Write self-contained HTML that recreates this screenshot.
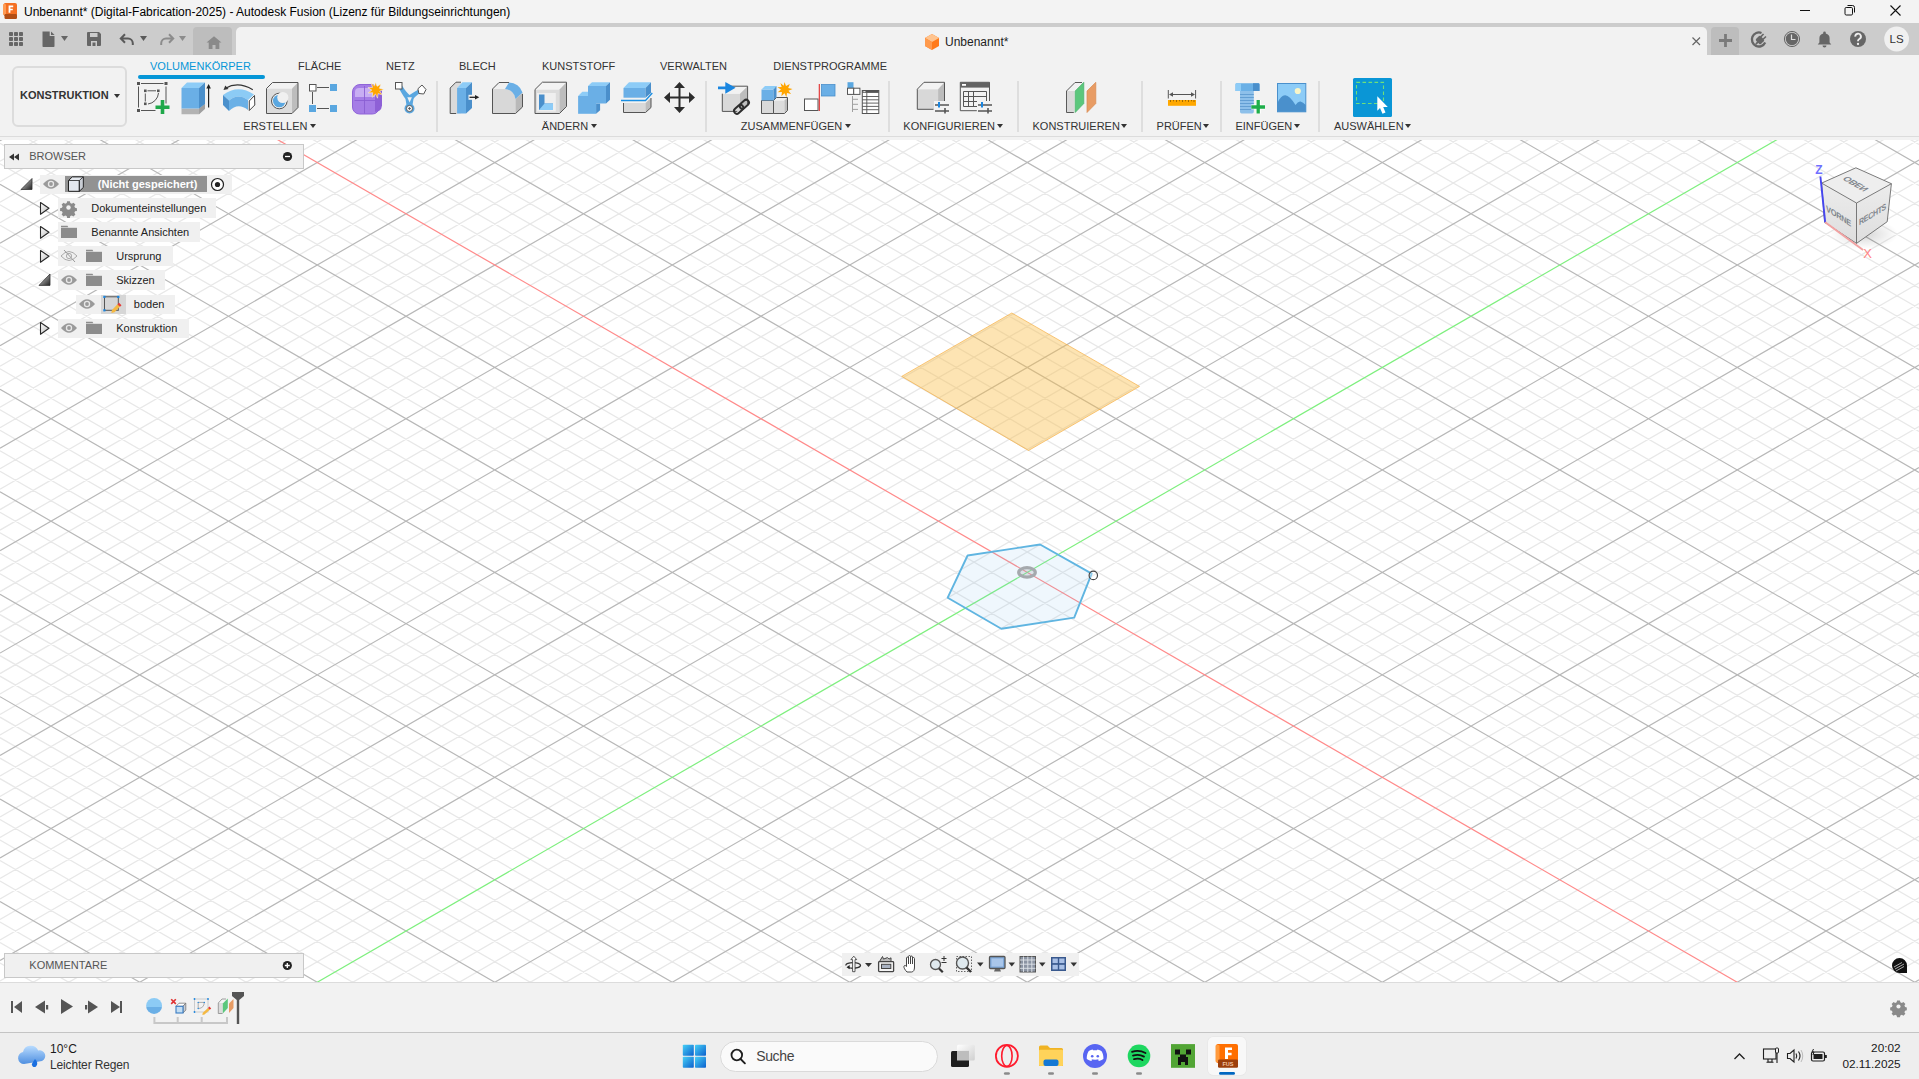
<!DOCTYPE html><html><head><meta charset="utf-8"><style>
html,body{margin:0;padding:0;width:1919px;height:1079px;overflow:hidden;background:#f2f2f2}
.t{position:absolute;white-space:nowrap;line-height:1;font-family:"Liberation Sans", sans-serif}
svg{display:block}
</style></head><body><div style="position:absolute;left:0;top:140px;width:1919px;height:842px;background:#fff;overflow:hidden"><svg width="1919" height="842" viewBox="0 140 1919 842" style="position:absolute;left:0;top:0"><path d="M0 1045.04L1919 2152.81M0 1024.54L1919 2132.32M0 983.56L1919 2091.34M0 963.07L1919 2070.84M0 942.57L1919 2050.35M0 922.08L1919 2029.86M0 881.09L1919 1988.87M0 860.60L1919 1968.38M0 840.11L1919 1947.88M0 819.61L1919 1927.39M0 778.63L1919 1886.41M0 758.14L1919 1865.91M0 737.64L1919 1845.42M0 717.15L1919 1824.93M0 676.16L1919 1783.94M0 655.67L1919 1763.45M0 635.18L1919 1742.95M0 614.68L1919 1722.46M0 573.70L1919 1681.48M0 553.21L1919 1660.98M0 532.71L1919 1640.49M0 512.22L1919 1620.00M0 471.23L1919 1579.01M0 450.74L1919 1558.52M0 430.25L1919 1538.02M0 409.75L1919 1517.53M0 368.77L1919 1476.55M0 348.28L1919 1456.05M0 327.78L1919 1435.56M0 307.29L1919 1415.07M0 266.30L1919 1374.08M0 245.81L1919 1353.59M0 225.32L1919 1333.09M0 204.82L1919 1312.60M0 163.84L1919 1271.62M0 143.35L1919 1251.12M0 122.85L1919 1230.63M0 102.36L1919 1210.14M0 61.37L1919 1169.15M0 40.88L1919 1148.66M0 20.39L1919 1128.16M0 -0.11L1919 1107.67M0 -41.09L1919 1066.69M0 -61.58L1919 1046.19M0 -82.08L1919 1025.70M0 -102.57L1919 1005.21M0 -143.56L1919 964.22M0 -164.05L1919 943.73M0 -184.54L1919 923.23M0 -205.04L1919 902.74M0 -246.02L1919 861.76M0 -266.51L1919 841.26M0 -287.01L1919 820.77M0 -307.50L1919 800.28M0 -348.49L1919 759.29M0 -368.98L1919 738.80M0 -389.47L1919 718.30M0 -409.97L1919 697.81M0 -450.95L1919 656.83M0 -471.44L1919 636.33M0 -491.94L1919 615.84M0 -512.43L1919 595.35M0 -553.42L1919 554.36M0 -573.91L1919 533.87M0 -594.40L1919 513.37M0 -614.90L1919 492.88M0 -655.88L1919 451.90M0 -676.37L1919 431.40M0 -696.87L1919 410.91M0 -717.36L1919 390.42M0 -758.35L1919 349.43M0 -778.84L1919 328.94M0 -799.33L1919 308.44M0 -819.83L1919 287.95M0 -860.81L1919 246.97M0 -881.30L1919 226.47M0 -901.80L1919 205.98M0 -922.29L1919 185.49M0 -963.28L1919 144.50M0 -983.77L1919 124.01M0 -1004.26L1919 103.51M0 -1024.76L1919 83.02M0 79.27L1919 -1028.51M0 99.76L1919 -1008.01M0 120.26L1919 -987.52M0 161.24L1919 -946.54M0 181.73L1919 -926.04M0 202.23L1919 -905.55M0 222.72L1919 -885.06M0 263.71L1919 -844.07M0 284.20L1919 -823.58M0 304.69L1919 -803.08M0 325.19L1919 -782.59M0 366.17L1919 -741.61M0 386.66L1919 -721.11M0 407.16L1919 -700.62M0 427.65L1919 -680.13M0 468.64L1919 -639.14M0 489.13L1919 -618.65M0 509.62L1919 -598.15M0 530.12L1919 -577.66M0 571.10L1919 -536.68M0 591.59L1919 -516.18M0 612.09L1919 -495.69M0 632.58L1919 -475.20M0 673.57L1919 -434.21M0 694.06L1919 -413.72M0 714.55L1919 -393.22M0 735.05L1919 -372.73M0 776.03L1919 -331.75M0 796.52L1919 -311.25M0 817.02L1919 -290.76M0 837.51L1919 -270.27M0 878.50L1919 -229.28M0 898.99L1919 -208.79M0 919.48L1919 -188.29M0 939.98L1919 -167.80M0 980.96L1919 -126.82M0 1001.45L1919 -106.32M0 1021.95L1919 -85.83M0 1042.44L1919 -65.34M0 1083.43L1919 -24.35M0 1103.92L1919 -3.86M0 1124.41L1919 16.64M0 1144.91L1919 37.13M0 1185.89L1919 78.11M0 1206.38L1919 98.61M0 1226.88L1919 119.10M0 1247.37L1919 139.59M0 1288.36L1919 180.58M0 1308.85L1919 201.07M0 1329.34L1919 221.57M0 1349.84L1919 242.06M0 1390.82L1919 283.04M0 1411.31L1919 303.54M0 1431.81L1919 324.03M0 1452.30L1919 344.52M0 1493.29L1919 385.51M0 1513.78L1919 406.00M0 1534.27L1919 426.50M0 1554.77L1919 446.99M0 1595.75L1919 487.97M0 1616.24L1919 508.47M0 1636.74L1919 528.96M0 1657.23L1919 549.45M0 1698.22L1919 590.44M0 1718.71L1919 610.93M0 1739.20L1919 631.43M0 1759.70L1919 651.92M0 1800.68L1919 692.90M0 1821.17L1919 713.40M0 1841.67L1919 733.89M0 1862.16L1919 754.38M0 1903.15L1919 795.37M0 1923.64L1919 815.86M0 1944.13L1919 836.36M0 1964.63L1919 856.85M0 2005.61L1919 897.83M0 2026.10L1919 918.33M0 2046.60L1919 938.82M0 2067.09L1919 959.31M0 2108.08L1919 1000.30M0 2128.57L1919 1020.79" stroke="#e8e8e8" stroke-width="1.3" fill="none"/><path d="M0 1004.05L1919 2111.83M0 901.59L1919 2009.36M0 799.12L1919 1906.90M0 696.66L1919 1804.43M0 594.19L1919 1701.97M0 491.73L1919 1599.50M0 389.26L1919 1497.04M0 286.80L1919 1394.57M0 184.33L1919 1292.11M0 81.87L1919 1189.64M0 -123.06L1919 984.71M0 -225.53L1919 882.25M0 -327.99L1919 779.78M0 -430.46L1919 677.32M0 -532.92L1919 574.85M0 -635.39L1919 472.39M0 -737.85L1919 369.92M0 -840.32L1919 267.46M0 -942.78L1919 164.99M0 140.75L1919 -967.03M0 243.21L1919 -864.56M0 345.68L1919 -762.10M0 448.14L1919 -659.63M0 550.61L1919 -557.17M0 653.07L1919 -454.70M0 755.54L1919 -352.24M0 858.00L1919 -249.77M0 960.47L1919 -147.31M0 1062.93L1919 -44.84M0 1267.86L1919 160.09M0 1370.33L1919 262.55M0 1472.79L1919 365.02M0 1575.26L1919 467.48M0 1677.72L1919 569.95M0 1780.19L1919 672.41M0 1882.65L1919 774.88M0 1985.12L1919 877.34M0 2087.58L1919 979.81" stroke="#b8b8b8" stroke-width="1.2" fill="none"/><polygon points="1011.8,313 1139.5,386.4 1028.5,450.5 901.7,376.4" fill="rgba(251,190,75,0.42)" stroke="rgba(245,175,70,0.7)" stroke-width="1"/><path d="M0 -20.60L1919 1087.18" stroke="#ff8a8a" stroke-width="1.2" fill="none"/><path d="M0 1165.40L1919 57.62" stroke="#7eef7e" stroke-width="1.2" fill="none"/><polygon points="967.6,555.5 1040.1,544.5 1091.7,573.6 1074.2,617.6 1001.3,628.8 947.7,597.7" fill="rgba(120,190,235,0.12)" stroke="#60b5e1" stroke-width="1.9" stroke-linejoin="round"/><ellipse cx="1027" cy="572.4" rx="8.3" ry="4.7" fill="rgba(160,165,170,0.25)" stroke="#a5a9ad" stroke-width="3.2"/><circle cx="1093.3" cy="575.4" r="4.2" fill="rgba(255,255,255,0.3)" stroke="#444" stroke-width="1.2"/></svg></div>
<div style="position:absolute;left:0px;top:0px;width:1919px;height:23px;background:#f3f3f3"></div>
<div class="t" style="left:24.00px;top:6.00px;font-size:12px;color:#000;font-weight:normal;">Unbenannt* (Digital-Fabrication-2025) - Autodesk Fusion (Lizenz für Bildungseinrichtungen)</div>
<div style="position:absolute;left:0px;top:23px;width:1919px;height:32px;background:#cccccc"></div>
<div style="position:absolute;left:193px;top:27px;width:39px;height:28px;background:#bdbdbd;border-radius:4px 4px 0 0"></div>
<div style="position:absolute;left:236px;top:27px;width:1471px;height:28px;background:#f2f2f2;border-radius:5px 5px 0 0"></div>
<div style="position:absolute;left:1711px;top:27px;width:28px;height:28px;background:#bdbdbd;border-radius:4px 4px 0 0"></div>
<div class="t" style="left:945.00px;top:36.00px;font-size:12px;color:#222;font-weight:normal;">Unbenannt*</div>
<div style="position:absolute;left:0px;top:55px;width:1919px;height:81px;background:#f2f2f2"></div>
<div style="position:absolute;left:0px;top:136px;width:1919px;height:1px;background:#dcdcdc"></div>
<div style="position:absolute;left:0px;top:137px;width:1919px;height:3px;background:#f2f2f2"></div>
<div style="position:absolute;left:11.5px;top:65.5px;width:115.0px;height:61.3px;border:2px solid #dcdcdc;border-radius:6px;box-sizing:border-box"></div>
<div class="t" style="left:20.00px;top:90.00px;font-size:11px;color:#333;font-weight:bold;">KONSTRUKTION</div>
<svg style="position:absolute;left:114px;top:94px;" width="6" height="4" viewBox="0 0 6 4"><path d="M0 0H6L3.0 4Z" fill="#333"/></svg>
<div class="t" style="left:150.00px;top:61.00px;font-size:11px;color:#0696d7;font-weight:normal;">VOLUMENKÖRPER</div>
<div class="t" style="left:298.00px;top:61.00px;font-size:11px;color:#333;font-weight:normal;">FLÄCHE</div>
<div class="t" style="left:386.00px;top:61.00px;font-size:11px;color:#333;font-weight:normal;">NETZ</div>
<div class="t" style="left:459.00px;top:61.00px;font-size:11px;color:#333;font-weight:normal;">BLECH</div>
<div class="t" style="left:542.00px;top:61.00px;font-size:11px;color:#333;font-weight:normal;">KUNSTSTOFF</div>
<div class="t" style="left:660.00px;top:61.00px;font-size:11px;color:#333;font-weight:normal;">VERWALTEN</div>
<div class="t" style="left:773.30px;top:61.00px;font-size:11px;color:#333;font-weight:normal;">DIENSTPROGRAMME</div>
<div style="position:absolute;left:138px;top:75.4px;width:127px;height:3.3px;background:#0696d7;border-radius:2px"></div>
<div class="t" style="left:243.30px;top:121.00px;font-size:11px;color:#333;font-weight:normal;">ERSTELLEN</div>
<svg style="position:absolute;left:310px;top:124px;" width="6" height="4" viewBox="0 0 6 4"><path d="M0 0H6L3.0 4Z" fill="#333"/></svg>
<div class="t" style="left:541.80px;top:121.00px;font-size:11px;color:#333;font-weight:normal;">ÄNDERN</div>
<svg style="position:absolute;left:591.4px;top:124px;" width="6.0" height="4" viewBox="0 0 6.0 4"><path d="M0 0H6.0L3.0 4Z" fill="#333"/></svg>
<div class="t" style="left:740.80px;top:121.00px;font-size:11px;color:#333;font-weight:normal;">ZUSAMMENFÜGEN</div>
<svg style="position:absolute;left:845px;top:124px;" width="6" height="4" viewBox="0 0 6 4"><path d="M0 0H6L3.0 4Z" fill="#333"/></svg>
<div class="t" style="left:903.30px;top:121.00px;font-size:11px;color:#333;font-weight:normal;">KONFIGURIEREN</div>
<svg style="position:absolute;left:996.7px;top:124px;" width="6.0" height="4" viewBox="0 0 6.0 4"><path d="M0 0H6.0L3.0 4Z" fill="#333"/></svg>
<div class="t" style="left:1032.50px;top:121.00px;font-size:11px;color:#333;font-weight:normal;">KONSTRUIEREN</div>
<svg style="position:absolute;left:1121px;top:124px;" width="6" height="4" viewBox="0 0 6 4"><path d="M0 0H6L3.0 4Z" fill="#333"/></svg>
<div class="t" style="left:1156.60px;top:121.00px;font-size:11px;color:#333;font-weight:normal;">PRÜFEN</div>
<svg style="position:absolute;left:1203px;top:124px;" width="6" height="4" viewBox="0 0 6 4"><path d="M0 0H6L3.0 4Z" fill="#333"/></svg>
<div class="t" style="left:1235.40px;top:121.00px;font-size:11px;color:#333;font-weight:normal;">EINFÜGEN</div>
<svg style="position:absolute;left:1294px;top:124px;" width="6" height="4" viewBox="0 0 6 4"><path d="M0 0H6L3.0 4Z" fill="#333"/></svg>
<div class="t" style="left:1333.90px;top:121.00px;font-size:11px;color:#333;font-weight:normal;">AUSWÄHLEN</div>
<svg style="position:absolute;left:1405px;top:124px;" width="6" height="4" viewBox="0 0 6 4"><path d="M0 0H6L3.0 4Z" fill="#333"/></svg>
<div style="position:absolute;left:436px;top:81px;width:2px;height:51px;background:#dedede"></div>
<div style="position:absolute;left:705px;top:81px;width:2px;height:51px;background:#dedede"></div>
<div style="position:absolute;left:888px;top:81px;width:2px;height:51px;background:#dedede"></div>
<div style="position:absolute;left:1017px;top:81px;width:2px;height:51px;background:#dedede"></div>
<div style="position:absolute;left:1141px;top:81px;width:2px;height:51px;background:#dedede"></div>
<div style="position:absolute;left:1220px;top:81px;width:2px;height:51px;background:#dedede"></div>
<div style="position:absolute;left:1318px;top:81px;width:2px;height:51px;background:#dedede"></div>
<div style="position:absolute;left:1352.5px;top:78.2px;width:39.0px;height:39.3px;background:#0a96d6;border-radius:1.5px"></div>
<div style="position:absolute;left:0px;top:982px;width:1919px;height:1px;background:#dcdcdc"></div>
<div style="position:absolute;left:0px;top:983px;width:1919px;height:49px;background:#f2f2f2"></div>
<div style="position:absolute;left:0px;top:1032px;width:1919px;height:1px;background:#c4c4c4"></div>
<div style="position:absolute;left:0px;top:1033px;width:1919px;height:46px;background:#eeeeee"></div>
<div style="position:absolute;left:4px;top:144px;width:300px;height:25px;background:#f0f0f0;border:1px solid #c8c8c8;box-sizing:border-box"></div>
<div class="t" style="left:29.20px;top:151.00px;font-size:11px;color:#555;font-weight:normal;">BROWSER</div>
<div style="position:absolute;left:4px;top:953px;width:300px;height:25px;background:#f0f0f0;border:1px solid #c8c8c8;box-sizing:border-box"></div>
<div class="t" style="left:29.30px;top:960.00px;font-size:11px;color:#555;font-weight:normal;">KOMMENTARE</div>
<svg style="position:absolute;left:0;top:0;" width="1919" height="1079" viewBox="0 0 1919 1079"><rect x="3.5" y="3" width="13.5" height="13" rx="2" fill="#f46f22"/><rect x="3" y="4" width="3" height="11" rx="1" fill="#ff9a52"/><rect x="4.5" y="14" width="12.5" height="5" rx="1.2" fill="#b24d14"/><path d="M8.6 5.6h4.6v1.6h-2.8v1.5h2.4v1.5h-2.4v2.6H8.6z" fill="#fff"/><path d="M1800 10.5h10" stroke="#111" stroke-width="1"/><rect x="1845" y="7.5" width="7.5" height="7.5" rx="1.2" fill="none" stroke="#111" stroke-width="1"/><path d="M1847.5 5.5h5a2 2 0 0 1 2 2v5" fill="none" stroke="#111" stroke-width="1"/><path d="M1890.5 5.5l10 10M1900.5 5.5l-10 10" stroke="#111" stroke-width="1.1"/><rect x="9" y="32" width="4" height="4" rx="0.8" fill="#666"/><rect x="9" y="37" width="4" height="4" rx="0.8" fill="#666"/><rect x="9" y="42" width="4" height="4" rx="0.8" fill="#666"/><rect x="14" y="32" width="4" height="4" rx="0.8" fill="#666"/><rect x="14" y="37" width="4" height="4" rx="0.8" fill="#666"/><rect x="14" y="42" width="4" height="4" rx="0.8" fill="#666"/><rect x="19" y="32" width="4" height="4" rx="0.8" fill="#666"/><rect x="19" y="37" width="4" height="4" rx="0.8" fill="#666"/><rect x="19" y="42" width="4" height="4" rx="0.8" fill="#666"/><path d="M42.5 31.5h7.2v4.6h4.8v10.2a0.8 0.8 0 0 1-0.8 0.8h-10.4a0.8 0.8 0 0 1-0.8-0.8z" fill="#666"/><path d="M51 31.5l3.6 3.6h-3.6z" fill="#666"/><path d="M61 36h7l-3.5 5z" fill="#666"/><path d="M88 32h11l2 2v11a1 1 0 0 1-1 1h-12a1 1 0 0 1-1-1v-12a1 1 0 0 1 1-1z" fill="#666"/><rect x="90" y="33" width="7.5" height="4" fill="#ccc"/><rect x="91" y="41" width="6" height="5" fill="#ccc"/><rect x="92.5" y="42.5" width="3" height="3.5" fill="#666"/><path d="M121 38.5h7a4.8 4.8 0 0 1 4.8 4.8v1.8M125 34.3l-4.2 4.2 4.2 4.2" fill="none" stroke="#5a5a5a" stroke-width="2"/><path d="M140 36h7l-3.5 5z" fill="#5a5a5a"/><path d="M173 38.5h-7a4.8 4.8 0 0 0-4.8 4.8v1.8M169 34.3l4.2 4.2-4.2 4.2" fill="none" stroke="#8c8c8c" stroke-width="2"/><path d="M179 36h7l-3.5 5z" fill="#8c8c8c"/><path d="M214 36.2l7.5 6.3h-2.2v6.5h-10.6v-6.5h-2.2z" fill="#8a8a8a"/><rect x="212.5" y="45" width="3" height="4" fill="#bdbdbd"/><path d="M932 34l7 4v8l-7 4-7-4v-8z" fill="#ff7a1a"/><path d="M932 34l7 4-7 4-7-4z" fill="#ffc48f"/><path d="M925 38l7 4v8l-7-4z" fill="#ff9a4d"/><path d="M1692.5 37.5l7.5 7.5M1700 37.5l-7.5 7.5" stroke="#666" stroke-width="1.2"/><path d="M1725.5 34v13M1719 40.5h13" stroke="#7a7a7a" stroke-width="2.8"/><path d="M1765.2 42.5A7 7 0 1 1 1761.5 33" fill="none" stroke="#666" stroke-width="2.3"/><g transform="rotate(45 1760.5 39.5)"><rect x="1757" y="37" width="7" height="6.5" rx="1.5" fill="#666"/><rect x="1758" y="33.5" width="1.6" height="4" fill="#666"/><rect x="1761.4" y="33.5" width="1.6" height="4" fill="#666"/><rect x="1759.6" y="43" width="1.8" height="3" fill="#666"/></g><circle cx="1792" cy="39" r="7.6" fill="none" stroke="#666" stroke-width="1"/><circle cx="1792" cy="39" r="6.2" fill="#666"/><path d="M1791.5 34.5v5h4" fill="none" stroke="#ddd" stroke-width="1.2"/><path d="M1824.5 31.5a1.3 1.3 0 0 1 1.3 1.3v0.6a5 5 0 0 1 3.8 4.9v4.2l1.7 2.1h-13.6l1.7-2.1v-4.2a5 5 0 0 1 3.8-4.9v-0.6a1.3 1.3 0 0 1 1.3-1.3z" fill="#666"/><path d="M1822.5 45.5a2 2 0 0 0 4 0z" fill="#666"/><circle cx="1858" cy="39" r="8" fill="#666"/><path d="M1855.3 36.6a2.8 2.8 0 1 1 4 2.4c-1 0.5-1.3 1-1.3 1.9v0.4" fill="none" stroke="#eee" stroke-width="1.9"/><circle cx="1858" cy="44" r="1.15" fill="#eee"/><circle cx="1896.6" cy="39" r="12.4" fill="#f0f0f0"/><text x="1896.6" y="43.2" font-family="Liberation Sans" font-size="11.5" fill="#333" text-anchor="middle">LS</text><g transform="translate(137,82)"><g fill="#555"><rect x="0" y="0" width="3" height="3"/><rect x="27.5" y="0" width="3" height="3"/><rect x="0" y="27" width="3" height="3"/><rect x="7" y="7.5" width="2.6" height="2.6"/><rect x="20" y="7.5" width="2.6" height="2.6"/><rect x="7" y="20.5" width="2.6" height="2.6"/></g><path d="M4 1.5h22.5M1.5 4.5v21M29 4.5v17M4 28.5h14.5M10.5 8.8h8.5M8.3 11.5v8M21.5 11A12 12 0 0 1 11 22" fill="none" stroke="#555" stroke-width="1"/><path d="M18.5 25.2h14M25.5 18v14" stroke="#1fa84a" stroke-width="3.6"/></g><g transform="translate(181,82)"><path d="M0.5 26.5h17.5l6-4.6v4.8l-6 5.5h-17.5z" fill="#b3b3b3"/><path d="M18 26.5l6-4.6v4.8l-6 5.5z" fill="#a0a0a0"/><path d="M0.5 6h17.5v20.5h-17.5z" fill="#6aafe6"/><path d="M0.5 6l5.5-5.5h18l-6 5.5z" fill="#8dccf7"/><path d="M18 6l6-5.5v21.4l-6 4.6z" fill="#4a8fcb"/><path d="M27.6 25.5V3.5" stroke="#222" stroke-width="1.2"/><path d="M25.3 6.5l2.3-4.5 2.3 4.5z" fill="#222"/></g><g transform="translate(220,80)"><path d="M5.5 8.3Q18 1 32.8 9.7" fill="none" stroke="#333" stroke-width="1.2"/><path d="M3.5 10l1.8-4.6 3.2 3.6z" fill="#333"/><path d="M3 15Q18 4 34 14.5L28 20Q18 13 9 20.5z" fill="#8ccbf5"/><path d="M3 15L9 20.5V31L3 25z" fill="#4a90cc"/><path d="M9 20.5Q18 13 28 20V30Q18 22 9 31z" fill="#6ab0e6"/><path d="M29.3 21L34.5 15.5L34.8 25L29.3 30.5z" fill="#fff" stroke="#444" stroke-width="1"/></g><g transform="translate(266,82)"><path d="M0.5 6.5h25.5v25h-25.5z" fill="#dcdcdc"/><path d="M0.5 6.5l6 -6h25.5l-6 6z" fill="#f2f2f2"/><path d="M26.0 6.5l6 -6v25l-6 6z" fill="#bdbdbd"/><path d="M0.5 31.5V6.5l6 -6h25.5v25l-6 6z" fill="none" stroke="#555" stroke-width="1" stroke-linejoin="round"/><circle cx="13.3" cy="19" r="7.8" fill="#f0f0f0" stroke="#555" stroke-width="1"/><circle cx="13.3" cy="19" r="6.3" fill="#5aa7e0"/><circle cx="16.8" cy="15.5" r="5.6" fill="#f0f0f0"/></g><g transform="translate(309,84)"><rect x="0.5" y="0.5" width="6.5" height="6.5" fill="#fff" stroke="#555" stroke-width="1"/><rect x="21" y="0" width="7" height="7" fill="#5aa7e0"/><rect x="0" y="21" width="7" height="7" fill="#5aa7e0"/><rect x="21" y="21" width="7" height="7" fill="#5aa7e0"/><path d="M8 3.5h12M8 24.5h12M3.5 8v12" stroke="#555" stroke-width="1"/></g><g transform="translate(352,82)"><path d="M8 2.5h13l6 4v19a6.5 6.5 0 0 1-6.5 6.5h-13A7 7 0 0 1 0.5 25V10A7.5 7.5 0 0 1 8 2.5z" fill="#a57de6" stroke="#8f64d8" stroke-width="1"/><path d="M3 10a4 4 0 0 1 4-4h16v9H3z" fill="#c8aef3"/><path d="M23 10.5l7-3.5v16.5a7 7 0 0 1-3 5.5l-4 1z" fill="#8e60d6"/><path d="M2.5 18.5h20.5M12.5 4v27.5" stroke="#8a5fd2" stroke-width="0.9"/><path d="M23.5 0l1.6 4.3 4-2.3-1.7 4.3 4.6 1.1-4.3 1.8 2.8 3.7-4.4-1.3-0.6 4.6-2-4.2-3.3 3.3 0.5-4.6-4.5 0.3 3.6-2.9-3.9-2.5 4.6-0.2-1.4-4.5 3.5 3z" fill="#ffa500" stroke="#f2f2f2" stroke-width="0.6"/></g><g transform="translate(394,82)"><path d="M4.5 5.5L8 3.5Q12 10 15.5 13Q20 10 24.5 7.5L27 10.5Q21 14 19.5 17L18.5 23H12.5L11.5 17Q8.5 13 4.5 5.5z" fill="#5aa7e0"/><path d="M13.3 15.2h4.6l-2.3 5.3z" fill="#f2f2f2"/><circle cx="15.5" cy="26.5" r="5" fill="#5aa7e0"/><circle cx="15.5" cy="26.5" r="3.1" fill="#f2f2f2" stroke="#555" stroke-width="0.9"/><path d="M15.5 25v3M14 26.5h3" stroke="#555" stroke-width="0.8"/><rect x="1.5" y="0.5" width="6.5" height="6.5" fill="#fff" stroke="#555" stroke-width="1"/><path d="M28 3l4 4.5-2.3 4.5-4.8-0.5-1-4.7z" fill="#fff" stroke="#555" stroke-width="1"/></g><g transform="translate(446,78)"><path d="M4.2 35.5V10l5.8-5.8h5V35.5z" fill="#dadada"/><path d="M4.2 35.5V10l5.8-5.8h5M4.2 35.5h6" fill="none" stroke="#555" stroke-width="1"/><path d="M11.1 10h8.9v25.5h-8.9z" fill="#6aafe6"/><path d="M11.1 10l5.4-5.8h9.5l-6 5.8z" fill="#8dccf7"/><path d="M20 10l6-5.8V30l-6 5.5z" fill="#4a8fcb"/><rect x="22.5" y="16.8" width="5" height="5" fill="#f2f2f2"/><path d="M23.5 19.3h6" stroke="#222" stroke-width="1.3"/><path d="M29 17l4.3 2.3-4.3 2.3z" fill="#222"/></g><g transform="translate(492,82)"><path d="M0.5 31.5V7l6.5-6.5h10l-4 6.5z" fill="#f0f0f0"/><path d="M0.5 7h13a10 10 0 0 1 10 10v14.5h-23z" fill="#d8d8d8"/><path d="M23.5 17l7-6.5v14.5l-7 6.5z" fill="#b9b9b9"/><path d="M13 7a11 11 0 0 1 10.5 10l7-6.5A14 14 0 0 0 17 0.5z" fill="#6aafe6"/><path d="M0.5 31.5V7l6.5-6.5h10M30.5 12v13l-7 6.5h-23" fill="none" stroke="#555" stroke-width="1"/></g><g transform="translate(446,78)"><path d="M89 11.5h24.5v24H89z" fill="#dcdcdc"/><path d="M89 11.5l7.4-7.3h24.1l-7 7.3z" fill="#f3f3f3"/><path d="M113.5 11.5l7-7.3v24.3l-7 7z" fill="#bdbdbd"/><path d="M89 35.5V11.5l7.4-7.3h24.1v24.3l-7 7z" fill="none" stroke="#555" stroke-width="1"/><rect x="91" y="15" width="18.8" height="18.5" fill="#efefef"/><path d="M93 16.5h5.5v9h8.5v6.5H93z" fill="#4a8fcb"/><path d="M98.5 25.5h8.5v6.5H93z" fill="#8dccf7"/></g><g transform="translate(574,78)"><path d="M4.1 18h18v17.8h-18z" fill="#6aafe6"/><path d="M4.1 18l4.2-4.3h10l-4.2 4.3z" fill="#8dccf7"/><path d="M22.1 25.5h4v6.7l-4 3.6z" fill="#4a8fcb"/><path d="M14 8h18v17.5h-18z" fill="#6aafe6"/><path d="M14 8l4-3.8h18l-4 3.8z" fill="#8dccf7"/><path d="M32 8l4-3.8v17.6l-4 3.7z" fill="#4a8fcb"/></g><g transform="translate(574,78)"><path d="M49.5 10h22v9.7h-22z" fill="#6aafe6"/><path d="M49.5 10l5.5-5.8h22l-5.5 5.8z" fill="#8dccf7"/><path d="M71.5 10l5.5-5.8V15l-5.5 4.7z" fill="#4a8fcb"/><path d="M47 22.5h24.5l6.8-7.5" fill="none" stroke="#1a8fe3" stroke-width="1.3"/><path d="M49.5 25h22v9.5h-22z" fill="#d9d9d9"/><path d="M71.5 25l5.5-5v9.5l-5.5 5z" fill="#bdbdbd"/><path d="M49.5 25v9.5h22l5.5-5V20" fill="none" stroke="#555" stroke-width="1"/></g><g transform="translate(664,82)"><path d="M15.5 3v26M2 15.5h27" stroke="#2d2d2d" stroke-width="2"/><path d="M15.5 0l5.5 6h-11zM15.5 31l5.5-6h-11zM0 15.5l6-5.5v11zM31 15.5l-6-5.5v11z" fill="#2d2d2d"/></g><g transform="translate(714,76)"><path d="M8.3 17.7h17.7v17.7H8.3z" fill="#d9d9d9"/><path d="M8.3 17.7l7.5-7.5h17.8l-7.6 7.5z" fill="#f2f2f2"/><path d="M26 17.7l7.6-7.5v17.8l-7.6 7.4z" fill="#bdbdbd"/><path d="M8.3 17.7v17.7h15M15.8 10.2h17.8v18" fill="none" stroke="#555" stroke-width="1"/><path d="M4 10.4h7.3v-4.5l10.3 5.9-10.3 6v-4.6h-7.3z" fill="#1a86e0"/><g transform="rotate(-42 27.5 30.8)"><rect x="18.5" y="28" width="10.5" height="5.6" rx="2.8" fill="none" stroke="#2d2d2d" stroke-width="2"/><rect x="26" y="28" width="10.5" height="5.6" rx="2.8" fill="none" stroke="#2d2d2d" stroke-width="2"/></g></g><g transform="translate(761,82)"><path d="M0.5 18.5h12v13h-12z" fill="#d9d9d9"/><path d="M0.5 18.5l0 -0h12l-0 0z" fill="#d9d9d9"/><path d="M12.5 18.5l0 -0v13l-0 0z" fill="#d9d9d9"/><path d="M0.5 31.5V18.5l0 -0h12v13l-0 0z" fill="none" stroke="#555" stroke-width="1" stroke-linejoin="round"/><path d="M12.5 18.5h11v13h-11z" fill="#dcdcdc"/><path d="M12.5 18.5l3 -3h11l-3 3z" fill="#f0f0f0"/><path d="M23.5 18.5l3 -3v13l-3 3z" fill="#bdbdbd"/><path d="M12.5 31.5V18.5l3 -3h11v13l-3 3z" fill="none" stroke="#555" stroke-width="1" stroke-linejoin="round"/><path d="M0.5 7.5h12v11h-12z" fill="#6aafe6"/><path d="M0.5 7.5l3.5-3.5h11.5l-3 3.5z" fill="#8dccf7"/><path d="M12.5 7.5l3-3.5v11l-3 3.5z" fill="#4a8fcb"/><path d="M23.5 0l1.5 4 3.8-2-1.6 4 4.3 1-4 1.7 2.6 3.4-4.1-1.2-0.6 4.3-1.9-3.9-3.1 3 0.5-4.3-4.2 0.3 3.3-2.7-3.6-2.3 4.3-0.2-1.3-4.2 3.3 2.8z" fill="#ffa500"/></g><g transform="translate(804,82)"><rect x="0.5" y="17" width="13.5" height="11.5" fill="#fff" stroke="#555" stroke-width="1"/><path d="M15.3 2v27" stroke="#e22b2b" stroke-width="1.1"/><rect x="17.5" y="2.5" width="13.5" height="11.5" fill="#6aafe6" stroke="#4a8fcb" stroke-width="0.8"/></g><g transform="translate(714,76)"><rect x="133.5" y="6.2" width="6" height="6" fill="#5aa7e0"/><rect x="133.5" y="12.2" width="6.2" height="6.2" fill="#fff" stroke="#555" stroke-width="1"/><rect x="139.7" y="12.2" width="6.2" height="6.2" fill="#fff" stroke="#555" stroke-width="1"/><path d="M138.5 20v16M138.5 23.3h5.5M138.5 28.3h5.5M138.5 33.4h5.5" stroke="#a0a0a0" stroke-width="1"/><rect x="148.3" y="14.5" width="16.5" height="23" fill="#fff" stroke="#555" stroke-width="1"/><rect x="148.3" y="14.5" width="16.5" height="2.4" fill="#555"/><rect x="149.3" y="15.2" width="2.2" height="1" fill="#fff"/><path d="M148.3 20.5h16.5M148.3 23.8h16.5M148.3 27.1h16.5M148.3 30.4h16.5M148.3 33.7h16.5M152.8 16.9v20.6" stroke="#555" stroke-width="0.9"/></g><g transform="translate(910,76)"><path d="M7.3 13.2h20.8v20.1H7.3z" fill="#d8d8d8"/><path d="M7.3 13.2L14 6.3h20.5l-6.4 6.9z" fill="#f3f3f3"/><path d="M28.1 13.2l6.4-6.9v20.2l-6.4 6.8z" fill="#bcbcbc"/><path d="M7.3 33.3V13.2L14 6.3h20.5V26.5M7.3 33.3h16.2" fill="none" stroke="#555" stroke-width="1"/><rect x="24" y="25" width="16" height="14" fill="#f2f2f2"/><path d="M25 29h14M25 35h14" stroke="#555" stroke-width="1.6"/><path d="M29 26v5.5" stroke="#1a86e0" stroke-width="2"/><path d="M35 32v5.5" stroke="#555" stroke-width="1.6"/></g><g transform="translate(910,76)"><path d="M50.3 34.7V6.3h29.2V26.5M50.3 34.7h16.5" fill="none" stroke="#555" stroke-width="1"/><rect x="50.3" y="6.3" width="29.2" height="5.3" fill="#636363"/><rect x="52" y="8" width="4" height="1.8" fill="#fff"/><path d="M53.5 15.5h23v10M53.5 15.5v15h13.5M53.5 20.5h23M53.5 25.5h14M58.5 15.5v15M63.5 15.5v15" fill="none" stroke="#555" stroke-width="1"/><rect x="67" y="25" width="16" height="14" fill="#f2f2f2"/><path d="M68 29h14M68 35h14" stroke="#555" stroke-width="1.6"/><path d="M72 26v5.5" stroke="#1a86e0" stroke-width="2"/><path d="M78 32v5.5" stroke="#555" stroke-width="1.6"/></g><g transform="translate(1060,74)"><path d="M6.5 17L15 8.5h8.8L15.2 17z" fill="#f2f2f2"/><rect x="7" y="17" width="7.5" height="21.5" fill="#d9d9d9"/><path d="M13.8 38.5H6.5V17L15 8.5h7" fill="none" stroke="#5a5a5a" stroke-width="1"/><path d="M15.2 17L23.8 8.3V29.5L15.2 38.5z" fill="#5bc77c" stroke="#4bb06a" stroke-width="0.7"/><path d="M27 17L35.8 8.3V29.5L27 38.5z" fill="#e89c64" stroke="#d88a50" stroke-width="0.7"/></g><g transform="translate(1160,76)"><path d="M8.3 14v8.5M35.6 14v8.5M10 18.5h24" stroke="#555" stroke-width="1"/><path d="M9 18.5l4-2.3v4.6zM35 18.5l-4-2.3v4.6z" fill="#555"/><rect x="8" y="24" width="28" height="5.8" fill="#ffa800"/><path d="M10.5 24v2M13.5 24v1.3M16.5 24v2M19.5 24v1.3M22.5 24v2M25.5 24v1.3M28.5 24v2M31.5 24v1.3M34 24v2" stroke="#8a5a00" stroke-width="0.8"/></g><g transform="translate(1160,76)"><path d="M75.5 8.5a1.2 1.2 0 0 1 1.2-1.2h21.6a1.2 1.2 0 0 1 1.2 1.2v6.5h-24z" fill="#6ab0e6"/><path d="M75.5 8.5a1.2 1.2 0 0 1 1.2-1.2h4.3v7.7h-5.5z" fill="#8dccf7"/><path d="M93 7.3h5.3a1.2 1.2 0 0 1 1.2 1.2v6.5H93z" fill="#4a8fcb"/><path d="M80 15h13.8v20.8a1.7 1.7 0 0 1-1.7 1.7h-10.4a1.7 1.7 0 0 1-1.7-1.7z" fill="#8dc0ea"/><path d="M80 18.5h13.8M80 21.5h13.8M80 24.5h13.8M80 27.5h13.8M80 30.5h13.8M80 33.5h13.8" stroke="#5f9bd0" stroke-width="0.9"/><rect x="89.5" y="28" width="17" height="11" fill="#f2f2f2" opacity="0"/><path d="M91.3 31h13.7M98.2 24v13.5" stroke="#fff" stroke-width="5.2"/><path d="M91.3 31h13.7M98.2 24v13.5" stroke="#1fae4b" stroke-width="3.3"/></g><g transform="translate(1160,76)"><rect x="117.5" y="7.5" width="28.3" height="28.3" fill="#8dccf7" stroke="#4a90cc" stroke-width="1"/><path d="M117.5 27Q121 19 125.3 19.3T135.5 29Q138 25 140.5 25.5T145.8 29V35.8h-28.3z" fill="#4a90cc"/><circle cx="137.8" cy="15" r="3.1" fill="#f8f5c8"/></g><g transform="translate(1346,74)"><rect x="10.5" y="8.4" width="27" height="21.1" fill="none" stroke="#6ee07a" stroke-width="1.1" stroke-dasharray="3.6 2.4"/><path d="M31.3 22.2V36.8L34 34L36.5 39.8L39.5 38.6L37.2 33.1H41.8z" fill="#fff"/></g></svg>
<div style="position:absolute;left:40px;top:174.5px;width:192px;height:19.5px;background:#f0f0f0"></div>
<div style="position:absolute;left:58px;top:198px;width:158px;height:19.5px;background:#f0f0f0"></div>
<div style="position:absolute;left:58px;top:222px;width:142px;height:19.5px;background:#f0f0f0"></div>
<div style="position:absolute;left:58px;top:246px;width:115px;height:19.5px;background:#f0f0f0"></div>
<div style="position:absolute;left:58px;top:270px;width:107px;height:19.5px;background:#f0f0f0"></div>
<div style="position:absolute;left:76px;top:294.5px;width:99px;height:19.0px;background:#f0f0f0"></div>
<div style="position:absolute;left:58px;top:318.5px;width:131px;height:19.0px;background:#f0f0f0"></div>
<div style="position:absolute;left:65px;top:176.3px;width:142px;height:15.699999999999989px;background:#929292"></div>
<div style="position:absolute;left:101px;top:294.5px;width:25px;height:19.0px;background:#d6d6d6"></div>
<div class="t" style="left:97.80px;top:179.00px;font-size:11px;color:#fff;font-weight:bold;">(Nicht gespeichert)</div>
<div class="t" style="left:91.30px;top:203.00px;font-size:11px;color:#222;font-weight:normal;">Dokumenteinstellungen</div>
<div class="t" style="left:91.30px;top:227.00px;font-size:11px;color:#222;font-weight:normal;">Benannte Ansichten</div>
<div class="t" style="left:116.20px;top:251.00px;font-size:11px;color:#222;font-weight:normal;">Ursprung</div>
<div class="t" style="left:116.20px;top:275.00px;font-size:11px;color:#222;font-weight:normal;">Skizzen</div>
<div class="t" style="left:133.80px;top:299.00px;font-size:11px;color:#222;font-weight:normal;">boden</div>
<div class="t" style="left:116.20px;top:323.00px;font-size:11px;color:#222;font-weight:normal;">Konstruktion</div>
<div class="t" style="left:1032.50px;top:121.00px;font-size:11px;color:#333;font-weight:normal;"></div>
<div style="position:absolute;left:842px;top:952.5px;width:237px;height:23.5px;background:#f0f0f0"></div>
<svg style="position:absolute;left:0;top:0;" width="1919" height="1079" viewBox="0 0 1919 1079"><defs><linearGradient id="tg" x1="0" y1="0" x2="1" y2="1"><stop offset="0" stop-color="#fff"/><stop offset="1" stop-color="#bbb"/></linearGradient><linearGradient id="tf" x1="0" y1="0" x2="1" y2="1"><stop offset="0" stop-color="#e0e0e0"/><stop offset="1" stop-color="#222"/></linearGradient></defs><path d="M21 189.5L32 178.5V189.5z" fill="url(#tf)" stroke="#333" stroke-width="0.8" stroke-linejoin="round"/><path d="M43 184Q51 174.5 59 184Q51 193.5 43 184z" fill="#9a9a9a"/><circle cx="51" cy="184" r="3.2" fill="#e8e8e8"/><circle cx="51" cy="184" r="1.9" fill="#9a9a9a"/><path d="M68.5 191.3V180.5l3.8-3.6h11v10.5l-4 3.9z" fill="#e4e8ee" stroke="#222" stroke-width="1"/><path d="M79.3 180.5l4-3.6v10.5l-4 3.9z" fill="#c9cdd4" stroke="#222" stroke-width="0.8"/><path d="M68.5 180.5h10.8v10.8" fill="none" stroke="#222" stroke-width="0.8"/><circle cx="217.5" cy="184.5" r="6" fill="#fff" stroke="#222" stroke-width="1.2"/><circle cx="217.5" cy="184.5" r="2.6" fill="#222"/><path d="M40.5 202.5L49 208.3L40.5 214.3z" fill="url(#tg)" stroke="#2a2a2a" stroke-width="1.1" stroke-linejoin="round"/><g transform="translate(68.5,207.5) scale(0.85)"><path d="M-1.6 -7.5h3.2l0.5 2.2 1.8 0.8 1.9-1.2 2.3 2.3-1.2 1.9 0.8 1.8 2.2 0.5v3.2l-2.2 0.5-0.8 1.8 1.2 1.9-2.3 2.3-1.9-1.2-1.8 0.8-0.5 2.2h-3.2l-0.5-2.2-1.8-0.8-1.9 1.2-2.3-2.3 1.2-1.9-0.8-1.8-2.2-0.5v-3.2l2.2-0.5 0.8-1.8-1.2-1.9 2.3-2.3 1.9 1.2 1.8-0.8z" fill="#8a8a8a"/><circle r="2.6" fill="#f0f0f0"/></g><path d="M40.5 226.5L49 232.3L40.5 238.3z" fill="url(#tg)" stroke="#2a2a2a" stroke-width="1.1" stroke-linejoin="round"/><path d="M61 225.8h6.5l0.8 1.4h-7.3z" fill="#8c8c8c"/><rect x="61" y="227.8" width="16" height="10.2" fill="#8c8c8c"/><path d="M40.5 250.5L49 256.3L40.5 262.3z" fill="url(#tg)" stroke="#2a2a2a" stroke-width="1.1" stroke-linejoin="round"/><path d="M61 256Q69 247 77 256Q69 265 61 256z" fill="none" stroke="#aaa" stroke-width="1"/><circle cx="69" cy="256" r="2.6" fill="none" stroke="#aaa" stroke-width="1"/><path d="M64 250L75 262" stroke="#999" stroke-width="1"/><path d="M86 249.8h6.5l0.8 1.4h-7.3z" fill="#8c8c8c"/><rect x="86" y="251.8" width="16" height="10.2" fill="#8c8c8c"/><path d="M39 285.4L50 274V285.4z" fill="url(#tf)" stroke="#333" stroke-width="0.8" stroke-linejoin="round"/><path d="M61 280Q69 270.5 77 280Q69 289.5 61 280z" fill="#9a9a9a"/><circle cx="69" cy="280" r="3.2" fill="#e8e8e8"/><circle cx="69" cy="280" r="1.9" fill="#9a9a9a"/><path d="M86 273.8h6.5l0.8 1.4h-7.3z" fill="#8c8c8c"/><rect x="86" y="275.8" width="16" height="10.2" fill="#8c8c8c"/><path d="M79 304Q87 294.5 95 304Q87 313.5 79 304z" fill="#9a9a9a"/><circle cx="87" cy="304" r="3.2" fill="#e8e8e8"/><circle cx="87" cy="304" r="1.9" fill="#9a9a9a"/><rect x="104.5" y="296.8" width="13.8" height="13.5" fill="none" stroke="#555" stroke-width="1"/><rect x="103.3" y="295.8" width="2.2" height="2.2" fill="#1a86e0"/><rect x="117.2" y="295.8" width="2.2" height="2.2" fill="#1a86e0"/><rect x="103.3" y="309.2" width="2.2" height="2.2" fill="#1a86e0"/><path d="M112 310l5.5-5.8 2.6 2.4-5.6 5.6-3.2 0.8z" fill="#f5b942"/><path d="M117.5 304.2l1.5-1.5 2.5 2.5-1.5 1.5z" fill="#e53935"/><path d="M40.5 322.5L49 328.3L40.5 334.3z" fill="url(#tg)" stroke="#2a2a2a" stroke-width="1.1" stroke-linejoin="round"/><path d="M61 328Q69 318.5 77 328Q69 337.5 61 328z" fill="#9a9a9a"/><circle cx="69" cy="328" r="3.2" fill="#e8e8e8"/><circle cx="69" cy="328" r="1.9" fill="#9a9a9a"/><path d="M86 321.8h6.5l0.8 1.4h-7.3z" fill="#8c8c8c"/><rect x="86" y="323.8" width="16" height="10.2" fill="#8c8c8c"/><path d="M9 157l5-3.5v7zM14 157l5-3.5v7z" fill="#333"/><circle cx="287.5" cy="156.5" r="4.6" fill="#222"/><path d="M285 156.5h5" stroke="#fff" stroke-width="1.3"/><circle cx="287.3" cy="965.5" r="4.6" fill="#222"/><path d="M284.8 965.5h5M287.3 963v5" stroke="#fff" stroke-width="1.3"/><path d="M846 965.5C845 962 861 961.5 860.5 965.5C860 968 852 969 848 967.5" fill="none" stroke="#333" stroke-width="1.3"/><path d="M846.5 967.3l3.2-2.3v4.3z" fill="#222"/><path d="M852.6 971.7V959.6h-1.7l2.9-3.4 2.9 3.4h-1.7v12.1z" fill="#fff" stroke="#444" stroke-width="0.9" stroke-linejoin="round"/><path d="M865 963h7l-3.5 4z" fill="#333"/><path d="M879.5 961.5l3-5 1 2.6 4-1.5 1.5 1.5 2-1.3v3.7" fill="#bbb" stroke="#444" stroke-width="1"/><rect x="878.6" y="961.6" width="15" height="10" rx="0.8" fill="#f4f4f4" stroke="#444" stroke-width="1.3"/><rect x="881.5" y="964.3" width="9.3" height="4.2" fill="#aab3c2" stroke="#444" stroke-width="1"/><path d="M907 972c-2-2-3.5-4.5-3-6 0.5-1 1.8-0.5 2.5 0.5v-8.5c0-1.3 2-1.3 2 0v6-7.5c0-1.3 2-1.3 2 0v7.5-7c0-1.3 2-1.3 2 0v7-5.5c0-1.3 2-1.3 2 0v8.5c0 3-1 5-3 5z" fill="#fff" stroke="#444" stroke-width="1"/><circle cx="935.5" cy="964.5" r="5" fill="#dfe9ee" stroke="#555" stroke-width="1.3"/><path d="M939 968.5l3.8 3.8" stroke="#333" stroke-width="2.2"/><path d="M941.5 958.5h5M944 956v5M941.5 962.5h5" stroke="#333" stroke-width="1"/><rect x="956.5" y="956.5" width="15" height="15" fill="none" stroke="#555" stroke-width="0.9" stroke-dasharray="1.5 1.5"/><circle cx="962.5" cy="963" r="6" fill="#dfe9ee" stroke="#555" stroke-width="1.4"/><path d="M966.5 967.5l4.5 4.5" stroke="#333" stroke-width="2.4"/><path d="M977 962.5h6.5l-3.25 4z" fill="#333"/><rect x="989.5" y="956.5" width="15.5" height="12" rx="1" fill="#7ea8da" stroke="#555" stroke-width="1.3"/><rect x="991.5" y="958.5" width="11.5" height="8" fill="#a9c6ea"/><path d="M994 971.5h7l-1-2.5h-5z" fill="#666"/><path d="M1008.5 962.5h6.5l-3.25 4z" fill="#333"/><rect x="1020" y="956.5" width="15.5" height="15.5" fill="#8b94a3" stroke="#555" stroke-width="1"/><path d="M1023.5 956.5v15.5M1027.8 956.5v15.5M1031.8 956.5v15.5M1020 960h15.5M1020 964.2h15.5M1020 968.3h15.5" stroke="#e0e4ea" stroke-width="0.9"/><path d="M1039 962.5h6.5l-3.25 4z" fill="#333"/><rect x="1051" y="957" width="15" height="14" fill="#39598e"/><rect x="1052.5" y="958.5" width="5.3" height="4.6" fill="#a9c0e6"/><rect x="1059.2" y="958.5" width="5.3" height="4.6" fill="#a9c0e6"/><rect x="1052.5" y="964.8" width="5.3" height="4.6" fill="#a9c0e6"/><rect x="1059.2" y="964.8" width="5.3" height="4.6" fill="#a9c0e6"/><path d="M1070.5 962.5h6.5l-3.25 4z" fill="#333"/><path d="M1899.5 958A7.5 7.5 0 0 1 1907 965.5V973h-7.5A7.5 7.5 0 0 1 1899.5 958z" fill="#111"/><path d="M1894 967l8-4.5M1895 969l9-5M1896 971l8-4.5" stroke="#bbb" stroke-width="0.9"/><defs><radialGradient id="sh" cx="0.5" cy="0.5" r="0.5"><stop offset="0" stop-color="#000" stop-opacity="0.16"/><stop offset="1" stop-color="#000" stop-opacity="0"/></radialGradient><linearGradient id="cf" x1="0" y1="0" x2="0" y2="1"><stop offset="0" stop-color="#ececec"/><stop offset="1" stop-color="#dedede"/></linearGradient></defs><ellipse cx="1864" cy="234" rx="34" ry="15" fill="url(#sh)"/><path d="M1821.6 183.1L1855.9 167.8L1891.4 183.7L1856.5 203z" fill="#eeeeee"/><path d="M1821.6 183.1L1856.5 203L1856.5 243.4L1824.6 222.3z" fill="url(#cf)"/><path d="M1856.5 203L1891.4 183.7L1887.2 221.7L1856.5 243.4z" fill="url(#cf)"/><path d="M1821.6 183.1L1855.9 167.8L1891.4 183.7L1887.2 221.7L1856.5 243.4L1824.6 222.3zM1821.6 183.1L1856.5 203L1891.4 183.7M1856.5 203V243.4" fill="none" stroke="#5a5a5a" stroke-width="0.8" stroke-linejoin="round"/><text transform="matrix(0.87,0.5,0.87,-0.5,1856,183.5)" font-family="Liberation Sans" font-weight="bold" font-size="9" fill="#80858c" text-anchor="middle" dominant-baseline="middle" letter-spacing="-0.3">OBEN</text><text transform="matrix(0.87,0.55,0,1,1838.5,216.5)" font-family="Liberation Sans" font-weight="bold" font-size="8.6" fill="#80858c" text-anchor="middle" dominant-baseline="middle" letter-spacing="-0.4">VORNE</text><text transform="matrix(0.82,-0.5,0,1,1872.5,215)" font-family="Liberation Sans" font-weight="bold" font-size="8.6" fill="#80858c" text-anchor="middle" dominant-baseline="middle" letter-spacing="-0.4">RECHTS</text><path d="M1820.4 176.5L1825.2 222.3" stroke="#4646f0" stroke-width="1.9"/><path d="M1825.2 222.3L1863.1 250" stroke="#f2a2a2" stroke-width="2"/><text x="1818.8" y="174.3" font-family="Liberation Sans" font-weight="bold" font-size="12" fill="#7070ff" text-anchor="middle">Z</text><text x="1867.6" y="257.6" font-family="Liberation Sans" font-size="13" fill="#ff8484" text-anchor="middle">X</text><g fill="#555"><rect x="11" y="1001" width="2" height="12"/><path d="M14 1007l8-6v12z"/><path d="M35 1007l10-6.5v13z"/><rect x="46" y="1005" width="2.2" height="4.5"/><path d="M61 999v15l12-7.5z"/><rect x="85" y="1005" width="2.2" height="4.5"/><path d="M98 1007l-10-6.5v13z"/><path d="M120 1007l-9-6v12z"/><rect x="120" y="1001" width="2" height="12"/></g><defs><linearGradient id="bs" x1="0" y1="0" x2="0" y2="1"><stop offset="0.55" stop-color="#8ccbf5"/><stop offset="0.56" stop-color="#6aafe6"/></linearGradient></defs><circle cx="154.1" cy="1005.9" r="8" fill="url(#bs)"/><path d="M171.2 999.3l4.6 4.6M175.8 999.3l-4.6 4.6" stroke="#e03030" stroke-width="1.6"/><path d="M176 1006.3l3-3.1h6.8l-2.8 3.1z" fill="#fff" stroke="#777" stroke-width="0.8"/><path d="M183 1006.3l2.8-3.1v6.8l-2.8 3z" fill="#c9ced6" stroke="#777" stroke-width="0.8"/><rect x="176" y="1006.3" width="7" height="6.7" fill="#c4def2" stroke="#3a7cc4" stroke-width="1.1"/><rect x="194.5" y="999" width="13.5" height="13" fill="none" stroke="#c8c8c8" stroke-width="0.9"/><path d="M198.2 1002.4v6.1M198.2 1002.4h6.1M204.3 1002.4Q204 1008 198.8 1008.5" fill="none" stroke="#999" stroke-width="0.8"/><g fill="#1a86e0"><circle cx="194.5" cy="999" r="0.9"/><circle cx="208" cy="999" r="0.9"/><circle cx="194.5" cy="1012" r="0.9"/><circle cx="198.2" cy="1002.4" r="0.7"/><circle cx="204.3" cy="1002.4" r="0.7"/><circle cx="198.2" cy="1008.5" r="0.7"/></g><path d="M202.8 1012.8l5.2-4.8 1.8 1.8-5.2 4.6-2.3 0.6z" fill="#f5b942"/><path d="M208 1008l1.4-1.4 1.8 1.8-1.4 1.4z" fill="#e53935"/><path d="M218.3 1003L222 999h4.5l-3.7 4z" fill="#f4f4f4"/><rect x="218.5" y="1003" width="4.2" height="10.5" fill="#dcdcdc"/><path d="M222.5 1013.5h-4.2V1003L222 999h4" fill="none" stroke="#888" stroke-width="0.8"/><path d="M222.8 1003.5l5-5v9.5l-5 5.5z" fill="#5bc77c"/><path d="M229 1003.5l4.5-4.5v9l-4.5 5z" fill="#e89c64"/><path d="M154.4 1017v6h72.6v-6M177.7 1017v6M201.7 1017v6" fill="none" stroke="#c8c8c8" stroke-width="2"/><path d="M232 992h12v4l-4.8 4v24h-2.4v-24l-4.8-4z" fill="#555"/><g transform="translate(1898.5,1006.5) scale(0.8)"><path d="M-1.8 -7.5h3.6l0.5 2.2 1.9 0.8 1.9-1.2 2.5 2.5-1.2 1.9 0.8 1.9 2.2 0.5v3.6l-2.2 0.5-0.8 1.9 1.2 1.9-2.5 2.5-1.9-1.2-1.9 0.8-0.5 2.2h-3.6l-0.5-2.2-1.9-0.8-1.9 1.2-2.5-2.5 1.2-1.9-0.8-1.9-2.2-0.5v-3.6l2.2-0.5 0.8-1.9-1.2-1.9 2.5-2.5 1.9 1.2 1.9-0.8z" fill="#8a8a8a"/><circle r="2.6" fill="#f2f2f2"/></g></svg>
<div style="position:absolute;left:719.5px;top:1040.5px;width:218.5px;height:31.0px;background:#fafafa;border:1px solid #dadada;border-radius:16px;box-sizing:border-box"></div>
<div class="t" style="left:756.20px;top:1049.00px;font-size:14px;color:#444;font-weight:normal;letter-spacing:-0.35px">Suche</div>
<div class="t" style="left:50.00px;top:1043.00px;font-size:12px;color:#1a1a1a;font-weight:normal;">10°C</div>
<div class="t" style="left:50.00px;top:1059.00px;font-size:12px;color:#333;font-weight:normal;letter-spacing:-0.15px">Leichter Regen</div>
<div class="t" style="right:18.4px;left:auto;top:1043px;font-size:11.8px;color:#1a1a1a;text-align:right">20:02</div>
<div class="t" style="right:18.4px;left:auto;top:1058.5px;font-size:11.8px;color:#1a1a1a;text-align:right">02.11.2025</div>
<div style="position:absolute;left:1208.2px;top:1037px;width:37.59999999999991px;height:38px;background:#f8f8f8;border-radius:5px;box-shadow:0 0 0 0.5px #e4e4e4"></div>
<svg style="position:absolute;left:0;top:0;" width="1919" height="1079" viewBox="0 0 1919 1079"><defs><linearGradient id="wl" x1="0" y1="0" x2="1" y2="1"><stop offset="0" stop-color="#46d0f7"/><stop offset="1" stop-color="#0b5fcd"/></linearGradient><linearGradient id="tv" x1="0" y1="0" x2="1" y2="1"><stop offset="0" stop-color="#fff"/><stop offset="1" stop-color="#cfcfcf"/></linearGradient><linearGradient id="wc" x1="0" y1="0" x2="0" y2="1"><stop offset="0" stop-color="#b9dcff"/><stop offset="1" stop-color="#4f8fe0"/></linearGradient></defs><g fill="url(#wl)"><rect x="682.8" y="1044.8" width="11" height="11" rx="0.8"/><rect x="695" y="1044.8" width="11" height="11" rx="0.8"/><rect x="682.8" y="1056.8" width="11" height="11" rx="0.8"/><rect x="695" y="1056.8" width="11" height="11" rx="0.8"/></g><circle cx="736.8" cy="1055" r="5.3" fill="none" stroke="#1f1f1f" stroke-width="1.8"/><path d="M740.6 1059l4.3 4.3" stroke="#1f1f1f" stroke-width="1.9" stroke-linecap="round"/><rect x="957" y="1044.8" width="17.8" height="15.7" rx="1.5" fill="url(#tv)"/><rect x="951" y="1050.9" width="18" height="16" rx="1.5" fill="#1e1e1e"/><rect x="957" y="1050.9" width="12" height="9.6" fill="#bdbdbd"/><circle cx="1006.9" cy="1055.9" r="11" fill="none" stroke="#ff1b2d" stroke-width="1.8"/><ellipse cx="1006.9" cy="1055.9" rx="5.2" ry="10.4" fill="none" stroke="#ff1b2d" stroke-width="1.6"/><path d="M1039 1047a1.5 1.5 0 0 1 1.5-1.5h7l2.5 2.5h11.5a1.5 1.5 0 0 1 1.5 1.5v16.5h-24z" fill="#f0b323"/><rect x="1039" y="1049.8" width="24" height="16.2" rx="1" fill="#ffd35a"/><rect x="1043.5" y="1059.5" width="15" height="6.5" rx="2" fill="#1478d4"/><circle cx="1095" cy="1055.9" r="12" fill="#5865f2"/><path d="M1088.5 1051.3c1.6-1.2 3.3-1.7 4.2-1.8l0.4 0.8c1.3-0.2 2.6-0.2 3.9 0l0.4-0.8c0.9 0.1 2.6 0.6 4.2 1.8 1.4 2.3 2 5 1.8 7.6-1.5 1.1-3 1.8-4.5 2.2l-1-1.5c0.6-0.2 1.1-0.5 1.6-0.8-2.8 1.3-6 1.3-8.8 0 0.5 0.3 1 0.6 1.6 0.8l-1 1.5c-1.5-0.4-3-1.1-4.5-2.2-0.2-2.6 0.4-5.3 1.8-7.6z" fill="#fff"/><circle cx="1092.2" cy="1056.2" r="1.3" fill="#5865f2"/><circle cx="1097.8" cy="1056.2" r="1.3" fill="#5865f2"/><circle cx="1139" cy="1055.9" r="11.3" fill="#1ed760"/><path d="M1132 1051.8c4.5-1.4 9.5-1 13.5 1.2M1133 1055.6c3.8-1.1 7.8-0.8 11 1M1134 1059.2c3-0.8 6-0.6 8.5 0.8" fill="none" stroke="#111" stroke-width="1.8" stroke-linecap="round"/><rect x="1171" y="1044.1" width="24" height="23.7" fill="#52a535"/><g fill="#111"><rect x="1175" y="1049.5" width="5" height="5"/><rect x="1186" y="1049.5" width="5" height="5"/><rect x="1180" y="1054.5" width="6" height="4"/><rect x="1178" y="1057" width="10" height="5"/><rect x="1178" y="1062" width="3" height="3"/><rect x="1185" y="1062" width="3" height="3"/></g><rect x="1216" y="1044" width="22" height="19" rx="2" fill="#ff6f00"/><rect x="1215.5" y="1045" width="4" height="17" rx="1" fill="#ff9a3c"/><rect x="1218" y="1059.5" width="20" height="8.3" rx="1.3" fill="#9c3f0c"/><path d="M1225 1047.5h7v2.6h-4v2.6h3.6v2.5h-3.6v3.8h-3z" fill="#fff"/><text x="1228" y="1066.3" font-family="Liberation Sans" font-weight="bold" font-size="5.5" fill="#f2c7a8" text-anchor="middle">FUS</text><rect x="1219" y="1072" width="16" height="2.8" rx="1.4" fill="#0067c0"/><rect x="1003.9" y="1072.2" width="6" height="2.6" rx="1.3" fill="#8a8a8a"/><rect x="1048" y="1072.2" width="6" height="2.6" rx="1.3" fill="#8a8a8a"/><rect x="1092" y="1072.2" width="6" height="2.6" rx="1.3" fill="#8a8a8a"/><rect x="1136" y="1072.2" width="6" height="2.6" rx="1.3" fill="#8a8a8a"/><path d="M24 1064a6 6 0 0 1-1-11.9 8 8 0 0 1 15.2-1.5 5.5 5.5 0 0 1 3.8 10.3z" fill="url(#wc)"/><path d="M35 1059q4 4 1 7.5a2.6 2.6 0 0 1-3.5-3.8z" fill="#1a6fe0"/><path d="M1734.5 1059l5-5 5 5" fill="none" stroke="#1f1f1f" stroke-width="1.3"/><rect x="1763.5" y="1049" width="12.5" height="10" fill="none" stroke="#1f1f1f" stroke-width="1.1"/><path d="M1768 1059v3h4v-3M1766.5 1062.3h7" fill="none" stroke="#1f1f1f" stroke-width="1.1"/><rect x="1775.5" y="1048" width="3" height="5" rx="1" fill="#eee" stroke="#1f1f1f" stroke-width="1"/><path d="M1777 1053v10" stroke="#1f1f1f" stroke-width="1.1"/><path d="M1787.5 1053.5h2.5l4-3.5v12l-4-3.5h-2.5z" fill="none" stroke="#1f1f1f" stroke-width="1.1"/><path d="M1796 1053.5q1.5 2.5 0 5M1798.5 1051.5q3 4.5 0 9" fill="none" stroke="#1f1f1f" stroke-width="1.1"/><path d="M1801 1050q3.5 6 0 12" fill="none" stroke="#bbb" stroke-width="1"/><rect x="1811.5" y="1052" width="13" height="9" rx="1.5" fill="none" stroke="#1f1f1f" stroke-width="1.2"/><rect x="1813.5" y="1054" width="9" height="5" fill="#1f1f1f"/><rect x="1825" y="1055" width="1.8" height="3" fill="#1f1f1f"/><path d="M1813.5 1049l-1.5 3h2l-1 3" fill="none" stroke="#1f1f1f" stroke-width="1"/></svg></body></html>
